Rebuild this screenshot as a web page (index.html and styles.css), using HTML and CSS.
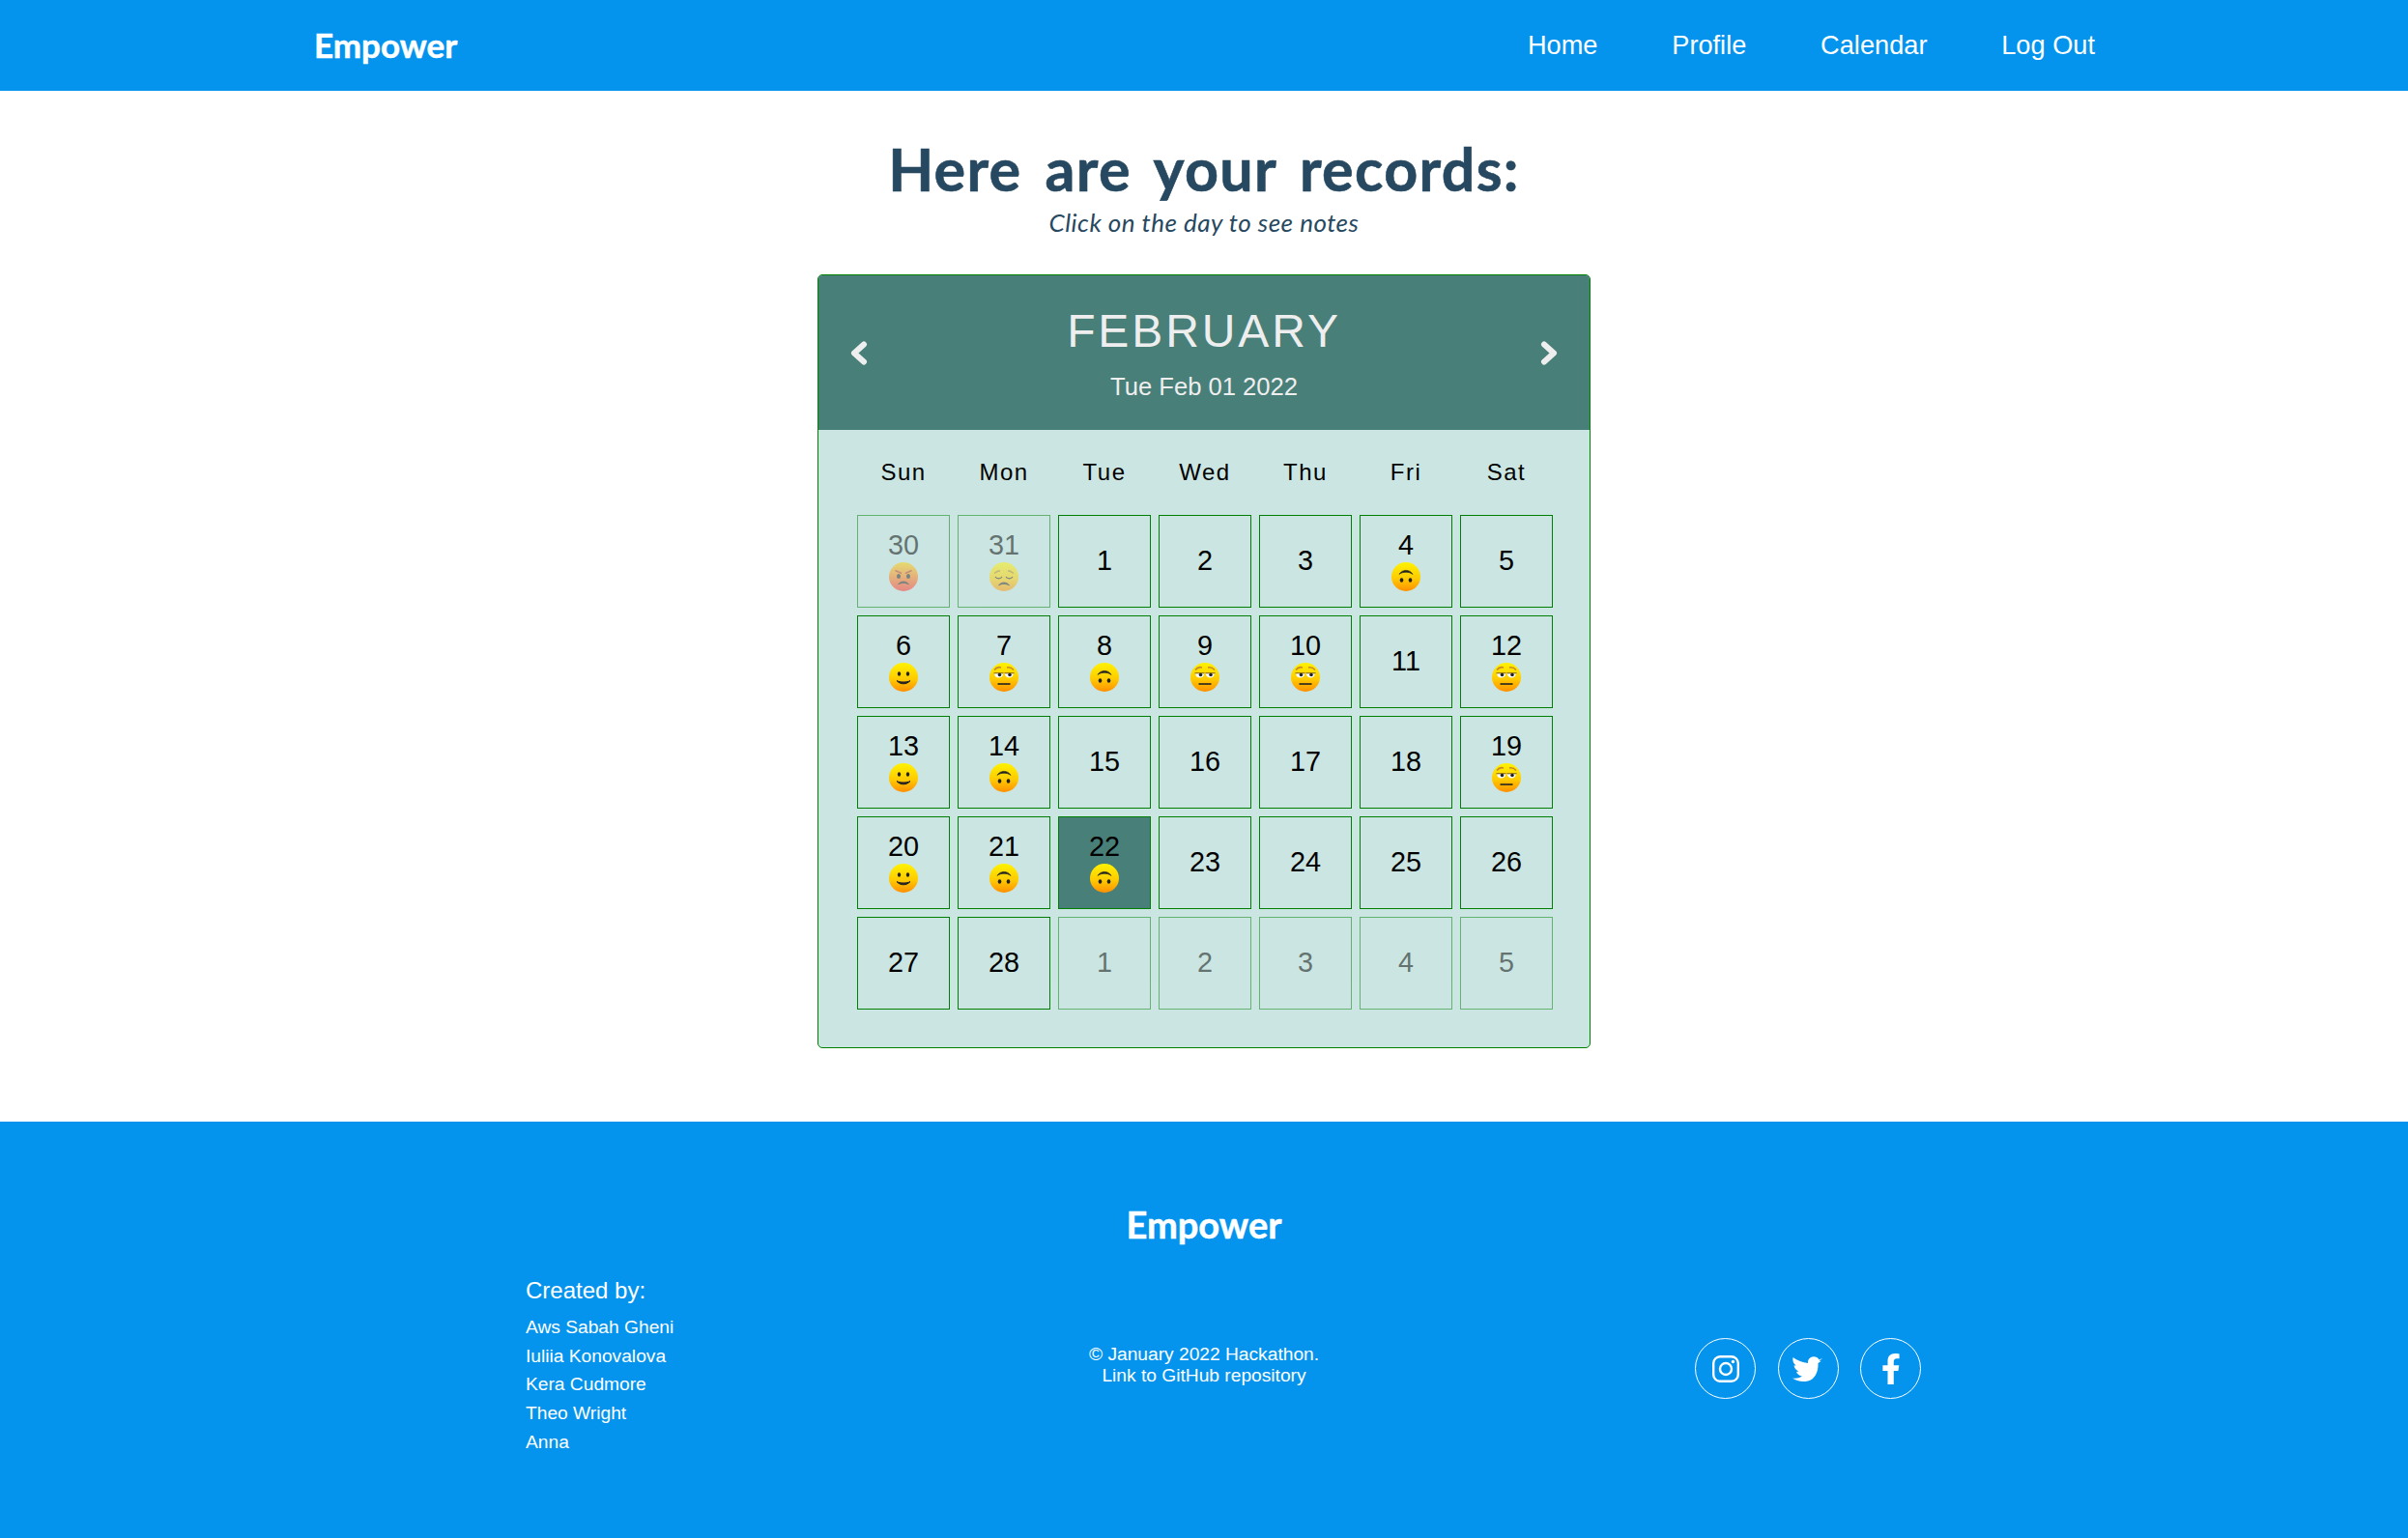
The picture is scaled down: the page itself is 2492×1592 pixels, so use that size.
FILE: index.html
```html
<!DOCTYPE html>
<html lang="en">
<head>
    <meta charset="UTF-8">
    <title>Empower - Calendar</title>
    <link rel="stylesheet" href="styles.css">
</head>
<body>
    <svg class="sprites" width="0" height="0" aria-hidden="true">
        <defs>
            <linearGradient id="yellow" x1="0" y1="0" x2="0" y2="1">
                <stop offset="0" stop-color="#fff200"/>
                <stop offset="0.55" stop-color="#ffcc00"/>
                <stop offset="1" stop-color="#ff9000"/>
            </linearGradient>
            <linearGradient id="red" x1="0" y1="0" x2="0" y2="1">
                <stop offset="0" stop-color="#ffd000"/>
                <stop offset="1" stop-color="#ff2c2c"/>
            </linearGradient>
            <symbol id="face-smile" viewBox="0 0 30 30">
                <circle cx="15" cy="15" r="15" fill="url(#yellow)"/>
                <ellipse cx="10.500" cy="11.500" rx="1.700" ry="2.300" fill="#222"/>
                <ellipse cx="19.500" cy="11.500" rx="1.700" ry="2.300" fill="#222"/>
                <path d="M8 18.500c3.500 4.400 10.500 4.400 14 0c-3 2-11 2-14 0z" fill="#222" stroke="#222" stroke-width="1"/>
            </symbol>
            <symbol id="face-meh" viewBox="0 0 30 30">
                <circle cx="15" cy="15" r="15" fill="url(#yellow)"/>
                <path d="M5 7.500c2-2.500 5-3.200 7-2.500M18 5c2.500-.7 5 .3 7 2.500" fill="none" stroke="#c9892a" stroke-width="1.600"/>
                <path d="M5 11h9.500c-.5 3-2.500 4.500-5 4.500S5.500 14 5 11zM15.500 11H25c-.5 3-2.500 4.500-4.500 4.500s-4.500-1.500-5-4.500z" fill="#fff"/>
                <path d="M4.500 10.800h10M15.500 10.800h10" stroke="#7a5a10" stroke-width="1"/>
                <circle cx="10.500" cy="12.500" r="1.800" fill="#222"/>
                <circle cx="21" cy="12.500" r="1.800" fill="#222"/>
                <path d="M8.500 22h13" stroke="#222" stroke-width="1.600"/>
            </symbol>
            <symbol id="face-upside" viewBox="0 0 30 30">
                <circle cx="15" cy="15" r="15" fill="url(#yellow)"/>
                <path d="M8 12.500c3-5.500 11-5.500 14 0c-3.500-3-10.500-3-14 0z" fill="#222" stroke="#222" stroke-width=".6"/>
                <ellipse cx="10.500" cy="18.500" rx="1.800" ry="2.200" fill="#222"/>
                <ellipse cx="19.500" cy="18.500" rx="1.800" ry="2.200" fill="#222"/>
            </symbol>
            <symbol id="face-angry" viewBox="0 0 30 30">
                <circle cx="15" cy="15" r="15" fill="url(#red)"/>
                <path d="M6.500 8.500l6.500 3M23.500 8.500l-6.500 3" stroke="#c23a1a" stroke-width="1.800"/>
                <ellipse cx="10" cy="14.500" rx="2" ry="2.500" fill="#222"/>
                <ellipse cx="20" cy="14.500" rx="2" ry="2.500" fill="#222"/>
                <path d="M9.500 23c2.500-4 8.500-4 11 0c-3-2-8-2-11 0z" fill="#222" stroke="#222" stroke-width=".8"/>
            </symbol>
            <symbol id="face-sad" viewBox="0 0 30 30">
                <circle cx="15" cy="15" r="15" fill="url(#yellow)"/>
                <path d="M5 11.500c2-1.500 4-2.500 6-2.700M25 11.500c-2-1.500-4-2.500-6-2.700" fill="none" stroke="#b8801f" stroke-width="1.400"/>
                <path d="M6 15c1.500 2.500 5.500 2.500 7 0M17 15c1.500 2.500 5.500 2.500 7 0" fill="none" stroke="#222" stroke-width="1.200"/>
                <path d="M9.500 24c2.500-4 8.500-4 11 0c-3-2-8-2-11 0z" fill="#222" stroke="#222" stroke-width=".8"/>
            </symbol>
        </defs>
    </svg>

    <nav class="navbar">
        <a class="brand" href="#">Empower</a>
        <div class="nav-links">
            <a href="#">Home</a>
            <a href="#">Profile</a>
            <a href="#">Calendar</a>
            <a href="#">Log Out</a>
        </div>
    </nav>

    <main class="content">
        <h1>Here are your records:</h1>
        <p class="hint">Click on the day to see notes</p>

        <div class="calendar">
            <div class="month">
                <svg class="chevron" viewBox="0 0 18 25"><polyline points="14,3.500 4,12.500 14,21.500"/></svg>
                <div class="month-title">
                    <h2>FEBRUARY</h2>
                    <p>Tue Feb 01 2022</p>
                </div>
                <svg class="chevron" viewBox="0 0 18 25"><polyline points="4,3.500 14,12.500 4,21.500"/></svg>
            </div>

            <div class="weekdays">
                <span>Sun</span><span>Mon</span><span>Tue</span><span>Wed</span><span>Thu</span><span>Fri</span><span>Sat</span>
            </div>

            <div class="days">
                <div class="day other">30<svg class="face"><use href="#face-angry"/></svg></div>
                <div class="day other">31<svg class="face"><use href="#face-sad"/></svg></div>
                <div class="day">1</div>
                <div class="day">2</div>
                <div class="day">3</div>
                <div class="day">4<svg class="face"><use href="#face-upside"/></svg></div>
                <div class="day">5</div>

                <div class="day">6<svg class="face"><use href="#face-smile"/></svg></div>
                <div class="day">7<svg class="face"><use href="#face-meh"/></svg></div>
                <div class="day">8<svg class="face"><use href="#face-upside"/></svg></div>
                <div class="day">9<svg class="face"><use href="#face-meh"/></svg></div>
                <div class="day">10<svg class="face"><use href="#face-meh"/></svg></div>
                <div class="day">11</div>
                <div class="day">12<svg class="face"><use href="#face-meh"/></svg></div>

                <div class="day">13<svg class="face"><use href="#face-smile"/></svg></div>
                <div class="day">14<svg class="face"><use href="#face-upside"/></svg></div>
                <div class="day">15</div>
                <div class="day">16</div>
                <div class="day">17</div>
                <div class="day">18</div>
                <div class="day">19<svg class="face"><use href="#face-meh"/></svg></div>

                <div class="day">20<svg class="face"><use href="#face-smile"/></svg></div>
                <div class="day">21<svg class="face"><use href="#face-upside"/></svg></div>
                <div class="day today">22<svg class="face"><use href="#face-upside"/></svg></div>
                <div class="day">23</div>
                <div class="day">24</div>
                <div class="day">25</div>
                <div class="day">26</div>

                <div class="day">27</div>
                <div class="day">28</div>
                <div class="day other">1</div>
                <div class="day other">2</div>
                <div class="day other">3</div>
                <div class="day other">4</div>
                <div class="day other">5</div>
            </div>
        </div>
    </main>

    <footer class="footer">
        <div class="footer-brand">Empower</div>
        <div class="footer-row">
            <div class="credits">
                <h3>Created by:</h3>
                <p>Aws Sabah Gheni</p>
                <p>Iuliia Konovalova</p>
                <p>Kera Cudmore</p>
                <p>Theo Wright</p>
                <p>Anna</p>
            </div>
            <div class="copyright">
                © January 2022 Hackathon.<br>
                <a href="#">Link to GitHub repository</a>
            </div>
            <div class="socials">
                <a href="#" class="social">
                    <svg class="icon-insta" viewBox="0 0 28 28"><rect x="1.200" y="1.200" width="25.600" height="25.600" rx="7" fill="none" stroke="#fff" stroke-width="2.400"/><circle cx="14" cy="14" r="6" fill="none" stroke="#fff" stroke-width="2.400"/><circle cx="21.500" cy="6.500" r="1.700" fill="#fff"/></svg>
                </a>
                <a href="#" class="social">
                    <svg class="icon-twitter" viewBox="15 17 32 28"><path d="M46 20L42.500 21.500C41 18.500 37 17.500 34 19C31.500 20.500 30.500 23 31 25C25.500 24.500 20 22 15.500 19C15 22 15.500 25 18.500 27.500L16.500 27.500C17 30.500 19 32.500 21.500 33.500L19 34C20 36.500 22 38 25 38.500C22 40.500 18.500 41 15 40.500C19 43.500 25 45 31 43.500C37.500 42 42 35 41.500 25L44.500 23L42.800 22.800Z"/></svg>
                </a>
                <a href="#" class="social">
                    <svg class="icon-fb" viewBox="0 0 320 512"><path d="M279.140 288l14.220-92.660h-88.910v-60.130c0-25.350 12.420-50.060 52.240-50.060h40.420V6.260S260.430 0 225.360 0c-73.220 0-121.080 44.380-121.080 124.720v70.620H22.890V288h81.390v224h100.170V288z"/></svg>
                </a>
            </div>
        </div>
    </footer>
</body>
</html>
```

FILE: styles.css
```css
* {
    box-sizing: border-box;
}

body {
    margin: 0;
    font-family: "Liberation Sans", Arial, sans-serif;
    background-color: #fff;
    color: #000;
}

a {
    color: inherit;
    text-decoration: none;
}

.sprites {
    display: block;
    height: 0;
}

.navbar {
    display: flex;
    align-items: center;
    justify-content: space-between;
    height: 94px;
    padding: 0 324px 0 325px;
    background-color: #0494ee;
    color: #fff;
}

.brand {
    margin-bottom: 3px;
    font-family: "Comic Sans MS", Lato, sans-serif;
    font-size: 35px;
    font-weight: bold;
    -webkit-text-stroke: 0.5px #fff;
}

.nav-links {
    display: flex;
    gap: 76.800px;
    font-size: 27.200px;
}

.content {
    display: flex;
    flex-direction: column;
    align-items: center;
    padding-top: 41px;
    height: 1067px;
}

.content h1 {
    margin: 0;
    font-family: "Comic Sans MS", Lato, sans-serif;
    font-size: 61px;
    font-weight: bold;
    line-height: 80px;
    letter-spacing: 1.300px;
    word-spacing: 8px;
    color: #264860;
    -webkit-text-stroke: 0.6px #264860;
}

.hint {
    margin: 0 0 39px;
    font-family: "Comic Sans MS", Lato, sans-serif;
    font-size: 26px;
    font-style: italic;
    line-height: 30px;
    letter-spacing: 0.500px;
    color: #264860;
}

.calendar {
    width: 800px;
    height: 801px;
    border: 1px solid #008000;
    border-radius: 5px;
    background-color: #cbe6e2;
    overflow: hidden;
}

.month {
    display: flex;
    align-items: center;
    justify-content: space-between;
    height: 160px;
    padding: 0 33px;
    background-color: #487f78;
    color: #eee;
}

.chevron {
    width: 18px;
    height: 25px;
    fill: none;
    stroke: #eee;
    stroke-width: 6;
    stroke-linecap: round;
    stroke-linejoin: round;
}

.month-title {
    text-align: center;
}

.month-title h2 {
    margin: 0 0 15px;
    font-size: 48px;
    font-weight: normal;
    letter-spacing: 2.900px;
    line-height: 55px;
}

.month-title p {
    margin: 0;
    font-size: 25.600px;
    line-height: 30px;
}

.weekdays {
    display: grid;
    grid-template-columns: repeat(7, 96px);
    column-gap: 8px;
    height: 88px;
    padding-left: 40px;
    align-items: center;
    font-size: 24px;
    letter-spacing: 1.500px;
    text-align: center;
}

.days {
    display: grid;
    grid-template-columns: repeat(7, 96px);
    grid-auto-rows: 96px;
    gap: 8px;
    padding-left: 40px;
}

.day {
    display: flex;
    flex-direction: column;
    align-items: center;
    justify-content: center;
    border: 1px solid #008000;
    padding-bottom: 2px;
    font-size: 28.800px;
    line-height: 33px;
}

.day.other {
    opacity: 0.5;
}

.day.today {
    background-color: #487f78;
}

.face {
    display: block;
    width: 30px;
    height: 30px;
    margin-top: 1px;
    flex: none;
}

.footer {
    height: 431px;
    padding-top: 76px;
    background-color: #0494ee;
    color: #fff;
}

.footer-brand {
    font-family: "Comic Sans MS", Lato, sans-serif;
    font-size: 38px;
    font-weight: bold;
    line-height: 60px;
    text-align: center;
    -webkit-text-stroke: 0.5px #fff;
}

.footer-row {
    display: grid;
    grid-template-columns: 468px 468px 1fr;
    align-items: center;
    margin: 25px 0 0 544px;
}

.credits h3 {
    margin: 0 0 13px;
    font-size: 24px;
    font-weight: normal;
    line-height: 28px;
}

.credits p {
    margin: 0 0 7.700px;
    font-size: 19.200px;
    line-height: 22px;
}

.copyright {
    margin-bottom: 7px;
    font-size: 19.200px;
    line-height: 22px;
    text-align: center;
}

.socials {
    display: flex;
    gap: 22.500px;
    padding-left: 274px;
}

.social {
    display: flex;
    align-items: center;
    justify-content: center;
    width: 63px;
    height: 63px;
    border: 1px solid #fff;
    border-radius: 50%;
    fill: #fff;
}

.icon-insta {
    width: 28px;
    height: 28px;
}

.icon-twitter {
    width: 32px;
    height: 28px;
}

.icon-fb {
    width: 22px;
    height: 32px;
}
```
